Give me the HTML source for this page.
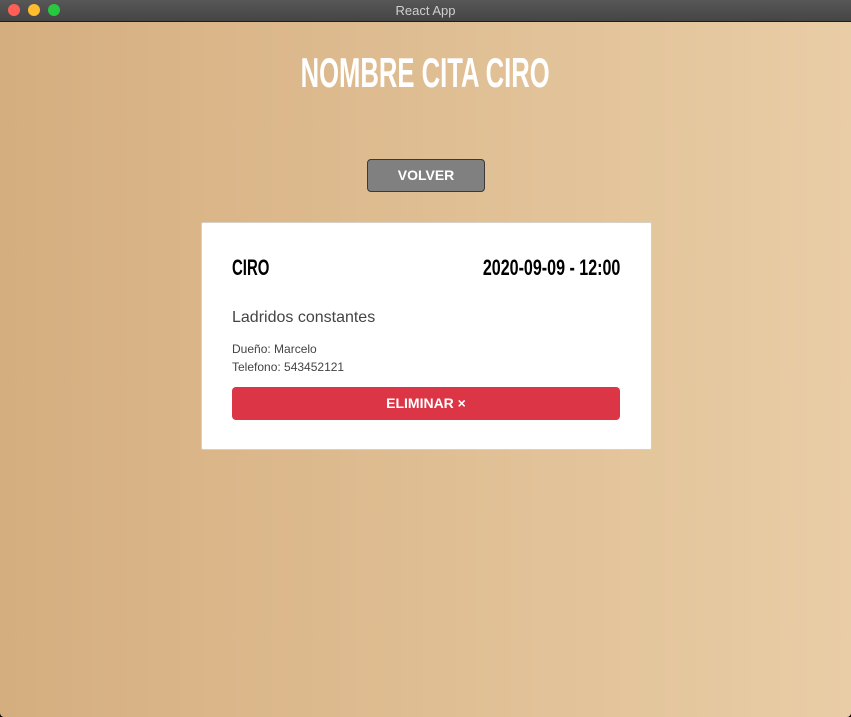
<!DOCTYPE html>
<html><head><meta charset="utf-8"><style>
*{margin:0;padding:0;box-sizing:border-box}
body{width:851px;height:717px;overflow:hidden;font-family:"Liberation Sans",sans-serif;background:#000}
.bar{position:absolute;left:0;top:0;width:851px;height:22px;background:linear-gradient(#575757,#454545);border-bottom:1px solid #1e1e1e;color:#cfcfcf;font-size:13px;text-align:center;line-height:21px}
.dot{position:absolute;top:4px;width:12px;height:12px;border-radius:50%}
.main{position:absolute;left:0;top:22px;width:851px;height:695px;background:linear-gradient(90deg,#d5ae7f,#e9cda6);border-radius:0 0 4px 4px}
.cond{display:inline-block;font-weight:bold;white-space:nowrap}
h1{position:absolute;left:0;width:851px;top:27px;text-align:center;color:#fff}
.volver{position:absolute;left:367px;top:137px;width:118px;height:33px;background:#808080;border:1px solid #3a3a3a;border-radius:4px;color:#fff;font-weight:bold;font-size:14px;text-align:center;line-height:31px}
.card{position:absolute;left:201px;top:200px;width:451px;height:228px;background:#fff;border:1px solid #d8d0c4;border-radius:2px}
.p{position:absolute;left:30px;color:#444;}
.del{position:absolute;left:30px;top:164px;width:388px;height:33px;background:#dc3545;border-radius:4px;color:#fff;font-weight:bold;font-size:14px;text-align:center;line-height:33px}
</style></head><body>
<div class="bar">React App
<div class="dot" style="left:8px;background:#fe5f57"></div>
<div class="dot" style="left:28px;background:#febc2e"></div>
<div class="dot" style="left:48px;background:#28c840"></div>
</div>
<div class="main">
<h1><span class="cond" style="font-size:42px;transform:scaleX(0.61);">NOMBRE CITA CIRO</span></h1>
<div class="volver">VOLVER</div>
<div class="card">
<div style="position:absolute;left:30px;top:32px;font-size:22px;color:#000;"><span class="cond" style="transform:scaleX(0.68);transform-origin:left;">CIRO</span></div>
<div style="position:absolute;right:31px;top:32px;font-size:22px;color:#000;"><span class="cond" style="transform:scaleX(0.73);transform-origin:right;">2020-09-09 - 12:00</span></div>
<div class="p" style="top:86px;font-size:16px">Ladridos constantes</div>
<div class="p" style="top:119px;font-size:12px">Dueño: Marcelo</div>
<div class="p" style="top:137px;font-size:12px">Telefono: 543452121</div>
<div class="del">ELIMINAR ×</div>
</div>
</div>
</body></html>
